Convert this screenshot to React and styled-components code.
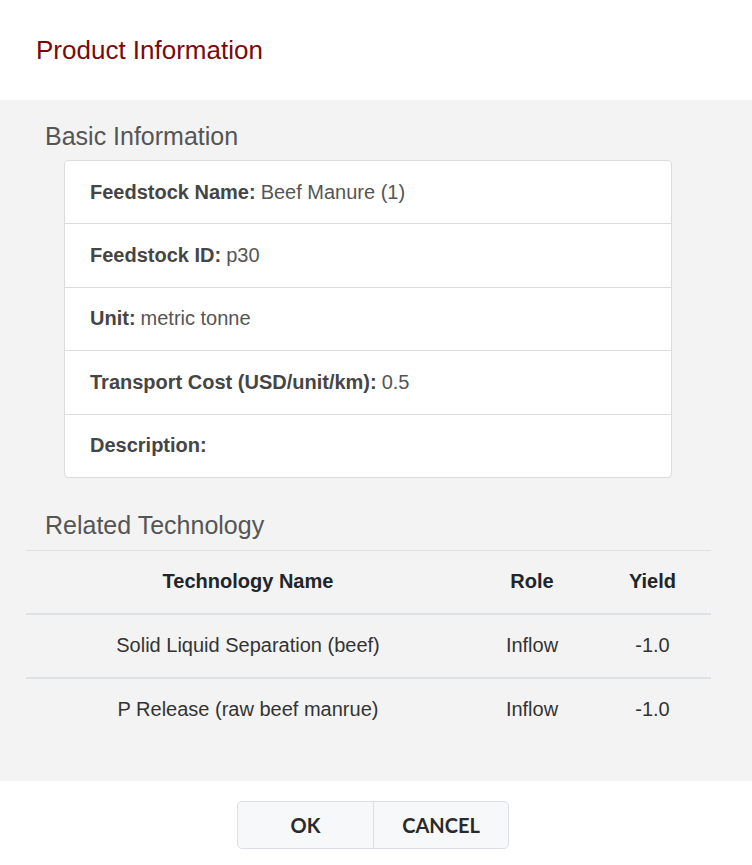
import React from "react";
import styled, { createGlobalStyle } from "styled-components";

const GlobalStyle = createGlobalStyle`
  body {
    margin: 0;
    background: #fff;
    font-family: "Liberation Sans", Arial, sans-serif;
  }
`;

const fields = [
  { label: "Feedstock Name:", value: "Beef Manure (1)" },
  { label: "Feedstock ID:", value: "p30" },
  { label: "Unit:", value: "metric tonne" },
  { label: "Transport Cost (USD/unit/km):", value: "0.5" },
  { label: "Description:", value: "" },
];

const technologies = [
  { name: "Solid Liquid Separation (beef)", role: "Inflow", yieldValue: "-1.0" },
  { name: "P Release (raw beef manrue)", role: "Inflow", yieldValue: "-1.0" },
];

const App = () => {
  return (
    <>
      <GlobalStyle />
      <Modal>
        <Header>
          <Title>Product Information</Title>
        </Header>

        <Body>
          <SectionTitle>Basic Information</SectionTitle>
          <Card>
            {fields.map((f) => (
              <FieldRow key={f.label}>
                <Label>{f.label}</Label> {f.value}
              </FieldRow>
            ))}
          </Card>

          <SectionTitle spaced>Related Technology</SectionTitle>
          <Table>
            <thead>
              <tr>
                <Th width={444}>Technology Name</Th>
                <Th width={124}>Role</Th>
                <Th width={117}>Yield</Th>
              </tr>
            </thead>
            <tbody>
              {technologies.map((t) => (
                <tr key={t.name}>
                  <Td>{t.name}</Td>
                  <Td>{t.role}</Td>
                  <Td>{t.yieldValue}</Td>
                </tr>
              ))}
            </tbody>
          </Table>
        </Body>

        <Footer>
          <ButtonGroup>
            <Button>OK</Button>
            <Button>CANCEL</Button>
          </ButtonGroup>
        </Footer>
      </Modal>
    </>
  );
};

const Modal = styled.div`
  width: 752px;
  min-height: 100vh;
  display: flex;
  flex-direction: column;
  background: #fff;
`;

const Header = styled.div`
  height: 100px;
  display: flex;
  align-items: center;
  padding-left: 36px;
  box-sizing: border-box;
`;

const Title = styled.h1`
  margin: 0;
  font-size: 26px;
  font-weight: 400;
  color: #7a0a0a;
`;

const Body = styled.div`
  background: #f3f3f3;
  padding: 22px 41px 40px 26px;
`;

const SectionTitle = styled.h2`
  margin: ${(props) => (props.spaced ? "33px 0 11px" : "0 0 10px")};
  padding-left: 19px;
  font-size: 25px;
  line-height: 28px;
  font-weight: 400;
  color: #555;
`;

const Card = styled.div`
  margin: 0 39px 0 38px;
  background: #fff;
  border: 1px solid #dcdcdc;
  border-radius: 4px;
`;

const FieldRow = styled.div`
  height: 62.4px;
  display: flex;
  align-items: center;
  gap: 5px;
  padding-left: 25px;
  font-size: 20px;
  color: #555;
  border-bottom: 1px solid #dcdcdc;

  &:last-child {
    border-bottom: none;
  }
`;

const Label = styled.span`
  font-weight: 700;
  color: #454545;
`;

const Table = styled.table`
  width: 685px;
  border-collapse: collapse;
  font-size: 20px;
  border-top: 1px solid #e0e0e0;
`;

const Th = styled.th`
  width: ${(props) => props.width}px;
  height: 62px;
  padding: 0;
  text-align: center;
  font-weight: 700;
  color: #212529;
  border-bottom: 2px solid #dee2e6;
`;

const Td = styled.td`
  height: 62px;
  padding: 0;
  text-align: center;
  color: #333;

  tr:first-child > & {
    border-bottom: 2px solid #dee2e6;
  }
`;

const Footer = styled.div`
  flex: 1;
  display: flex;
  justify-content: center;
  padding-top: 20px;
  padding-right: 6px;
`;

const ButtonGroup = styled.div`
  display: flex;
  height: 46px;
  border: 1px solid #dcdfe6;
  border-radius: 5px;
  overflow: hidden;
  background: #f7f8fa;
`;

const Button = styled.button`
  width: 135px;
  border: none;
  background: transparent;
  font-family: Lato, "Noto Sans", sans-serif;
  font-size: 20px;
  font-weight: 700;
  color: #2a2a2a;
  cursor: pointer;

  & + & {
    border-left: 1px solid #dcdfe6;
  }
`;

export default App;
